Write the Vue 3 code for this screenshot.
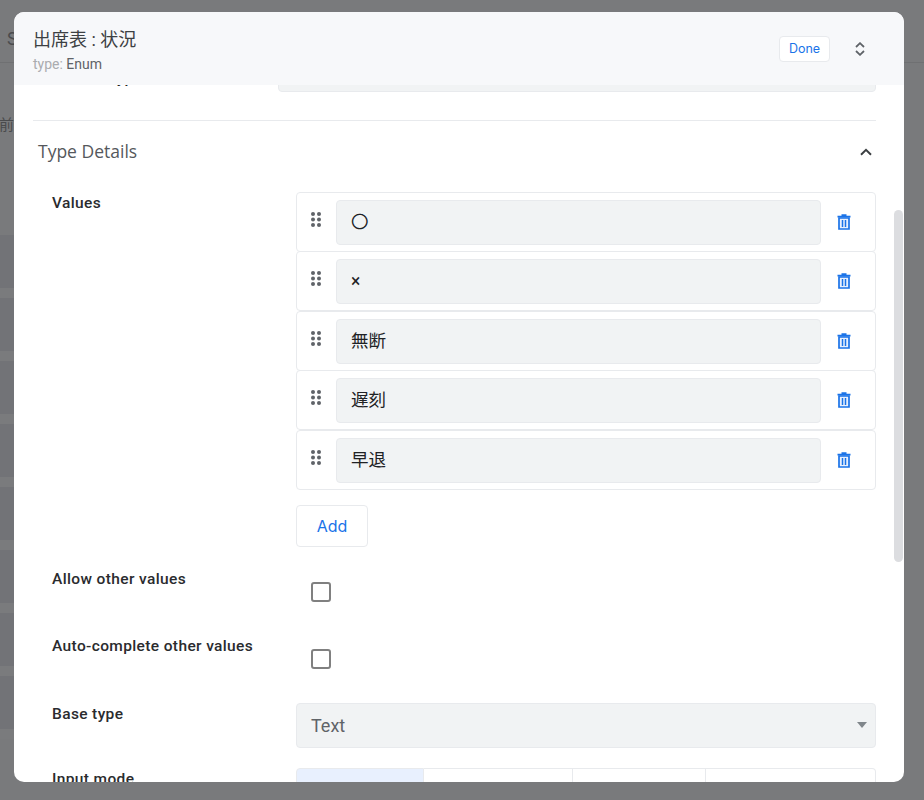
<script setup>
import { ref } from 'vue'

// rows of the table that sits behind the dialog
const backdropRows = Array.from({ length: 8 }, (_, i) => i)

const enumValues = ref(['〇', '×', '無断', '遅刻', '早退'])
const allowOther = ref(false)
const autoComplete = ref(false)
const inputModes = [128, 149, 133, 170]
const handleDots = [[2, 2], [8, 2], [2, 7.5], [8, 7.5], [2, 13], [8, 13]]
</script>

<template>
    <div class="page">
        <div class="backdrop">
            <div class="bd-head"><span>S</span></div>
            <div class="bd-label"><span>前</span></div>
            <div class="bd-rows">
                <div v-for="row in backdropRows" :key="row" class="bd-row"></div>
            </div>
        </div>

        <div class="modal">
            <div class="modal-header">
                <div class="titles">
                    <div class="title">出席表 : 状況</div>
                    <div class="subtitle"><span class="muted">type:</span> Enum</div>
                </div>
                <button type="button" class="btn-done">Done</button>
                <svg class="sort-icon" width="10" height="14" viewBox="0 0 10 14" fill="none" stroke="#5f6368" stroke-width="1.8">
                    <path d="M1 5 L5 1.2 L9 5" />
                    <path d="M1 9 L5 12.8 L9 9" />
                </svg>
            </div>

            <div class="modal-body">
                <div class="cut-row">
                    <div class="cut-label">Column type</div>
                    <div class="cut-field"></div>
                </div>
                <hr class="divider">
                <div class="section-head">
                    <span>Type Details</span>
                    <svg width="12" height="8" viewBox="0 0 12 8" fill="none" stroke="#3c4043" stroke-width="2">
                        <path d="M1 6.8 L6 1.8 L11 6.8" />
                    </svg>
                </div>

                <div class="form">
                    <label class="form-label">Values</label>
                    <div class="values-col">
                        <div v-for="val in enumValues" :key="val" class="value-row">
                            <svg class="handle" width="10" height="15" viewBox="0 0 10 15" fill="#5f6368">
                                <circle v-for="(d, i) in handleDots" :key="i" :cx="d[0]" :cy="d[1]" r="2" />
                            </svg>
                            <div class="value-input">{{ val }}</div>
                            <svg class="trash" width="14" height="16" viewBox="0 0 14 16">
                                <path d="M2 4 H12 V15 H2 Z" fill="#e8f0fe" stroke="#1a73e8" stroke-width="1.7" />
                                <path d="M0.5 2.6 H13.5 M4.5 1 H9.5" stroke="#1a73e8" stroke-width="1.7" fill="none" />
                                <path d="M5.5 6 V13 M8.5 6 V13" stroke="#1a73e8" stroke-width="1.5" fill="none" />
                            </svg>
                        </div>
                        <button type="button" class="btn-add">Add</button>
                    </div>

                    <label class="form-label">Allow other values</label>
                    <div class="check-col tall-a">
                        <input v-model="allowOther" type="checkbox" class="check">
                    </div>

                    <label class="form-label">Auto-complete other values</label>
                    <div class="check-col tall-b">
                        <input v-model="autoComplete" type="checkbox" class="check">
                    </div>

                    <label class="form-label">Base type</label>
                    <div class="select-col">
                        <div class="select-box">
                            <span>Text</span>
                            <i class="caret"></i>
                        </div>
                    </div>

                    <label class="form-label">Input mode</label>
                    <div class="segments">
                        <div v-for="(w, i) in inputModes" :key="i" class="segment" :class="{ active: i === 0 }" :style="{ width: w + 'px' }"></div>
                    </div>
                </div>
            </div>

            <div class="scroll-thumb"></div>
        </div>
    </div>
</template>

<style>
html,
body {
    margin: 0;
    background-color: #797a7c;
    overflow: hidden;
}
</style>

<style scoped>
.page {
    position: relative;
    height: 800px;
    overflow: hidden;
    background-color: #797a7c;
    font-family: Roboto, "Noto Sans CJK JP", sans-serif;
}

.backdrop {
    color: #4a4b4d;
    font-size: 15px;
}

.bd-head {
    height: 63px;
    border-bottom: 1px solid #6f7072;
    box-sizing: border-box;
    padding: 28px 0 0 7px;
    font-size: 18px;
}

.bd-label {
    height: 172px;
    padding-top: 50px;
    box-sizing: border-box;
}

.bd-label span {
    margin-left: -1px;
}

.bd-row {
    width: 20px;
    height: 63px;
    box-sizing: border-box;
    background: linear-gradient(#727377 0 53px, #7a7b7d 53px 62px, #6c6d6f 62px);
    border-bottom: 1px solid #7a7b7d;
}

.modal {
    position: absolute;
    left: 14px;
    top: 12px;
    width: 890px;
    height: 770px;
    background-color: white;
    border-radius: 10px;
    overflow: hidden;
    display: flex;
    flex-direction: column;
}

.modal-header {
    flex: 0 0 73px;
    box-sizing: border-box;
    background-color: #f7f8fa;
    display: flex;
    align-items: flex-start;
    padding: 0 39px 0 19px;
    position: relative;
    z-index: 1;
}

.titles {
    flex: 1;
    padding-top: 15px;
}

.title {
    font-size: 18px;
    line-height: 25px;
    color: #3c4043;
}

.subtitle {
    font-size: 14px;
    line-height: 18px;
    margin-top: 3px;
    color: #5f6368;
}

.muted {
    color: #aaacaf;
}

.btn-done {
    width: 51px;
    height: 26px;
    margin-top: 24px;
    padding: 0 0 2px;
    background-color: white;
    border: 1px solid #e8eaed;
    border-radius: 4px;
    color: #1a73e8;
    font-family: Inter, Roboto, sans-serif;
    font-size: 12.5px;
}

.sort-icon {
    margin: 30px 0 0 25px;
}

.modal-body {
    flex: 1;
    min-height: 0;
    overflow: hidden;
    padding: 0 28px 0 19px;
}

.cut-row {
    display: grid;
    grid-template-columns: 245px 1fr;
    margin-top: -40px;
}

.cut-label {
    padding: 23px 0 0 19px;
    font-size: 16px;
    font-weight: 500;
    line-height: 20px;
    color: #202124;
}

.cut-field {
    height: 47px;
    box-sizing: border-box;
    background-color: #f1f3f4;
    border: 1px solid #e8eaed;
    border-radius: 4px;
}

.divider {
    margin: 28px 0 0;
    border: 0;
    border-top: 1px solid #e8eaed;
}

.section-head {
    height: 62px;
    display: flex;
    align-items: center;
    justify-content: space-between;
    padding: 0 4px 0 5px;
    font-family: "Open Sans", Roboto, sans-serif;
    font-size: 17.5px;
    color: #55585c;
}

.section-head span {
    margin-top: -2px;
}

.form {
    margin-top: 9px;
    padding-left: 19px;
    display: grid;
    grid-template-columns: 244px 1fr;
}

.form-label {
    padding-top: 1px;
    font-size: 15.5px;
    font-weight: 500;
    line-height: 20px;
    letter-spacing: 0.37px;
    color: #2a2b2e;
}

.values-col {
    padding-bottom: 21px;
}

.value-row {
    height: 60px;
    box-sizing: border-box;
    margin-bottom: -0.6px;
    padding: 7px 24px 7px 14px;
    display: flex;
    align-items: flex-start;
    border: 1px solid #e8eaed;
    border-radius: 4px;
    background-color: white;
}

.handle {
    margin-top: 12px;
    flex: none;
}

.value-input {
    flex: 1;
    height: 45px;
    box-sizing: border-box;
    margin-left: 15px;
    padding-left: 14px;
    background-color: #f1f3f4;
    border: 1px solid #e8eaed;
    border-radius: 4px;
    font-size: 17.5px;
    line-height: 43px;
    color: #202124;
}

.trash {
    margin: 14px 0 0 16px;
    flex: none;
}

.btn-add {
    display: block;
    width: 72px;
    height: 42px;
    margin-top: 15.5px;
    padding: 0;
    background-color: white;
    border: 1px solid #e8eaed;
    border-radius: 4px;
    color: #1a73e8;
    font-family: Inter, Roboto, sans-serif;
    font-size: 16px;
}

.check-col {
    padding: 14px 0 0 15px;
    box-sizing: border-box;
}

.tall-a {
    height: 67px;
}

.tall-b {
    height: 68px;
}

.check {
    display: block;
    appearance: none;
    margin: 0;
    width: 20px;
    height: 20px;
    box-sizing: border-box;
    border: 2.5px solid #808080;
    border-radius: 3px;
    background-color: white;
}

.select-col {
    padding-bottom: 20px;
}

.select-box {
    height: 45px;
    box-sizing: border-box;
    padding: 0 8px 0 14px;
    display: flex;
    align-items: center;
    justify-content: space-between;
    background-color: #f1f3f4;
    border: 1px solid #e8eaed;
    border-radius: 4px;
    font-size: 18px;
    color: #5f6368;
}

.caret {
    width: 0;
    height: 0;
    border-left: 5.5px solid transparent;
    border-right: 5.5px solid transparent;
    border-top: 6px solid #80868b;
}

.segments {
    display: flex;
    height: 45px;
}

.segment {
    box-sizing: border-box;
    border: 1px solid #e8eaed;
    border-left-width: 0;
}

.segment:first-child {
    border-left-width: 1px;
    border-radius: 4px 0 0 0;
}

.segment:last-child {
    border-radius: 0 4px 0 0;
}

.segment.active {
    background-color: #e8f0fe;
}

.scroll-thumb {
    position: absolute;
    right: 1px;
    top: 198px;
    width: 9px;
    height: 352px;
    border-radius: 5px;
    background-color: #dcdde0;
}
</style>
